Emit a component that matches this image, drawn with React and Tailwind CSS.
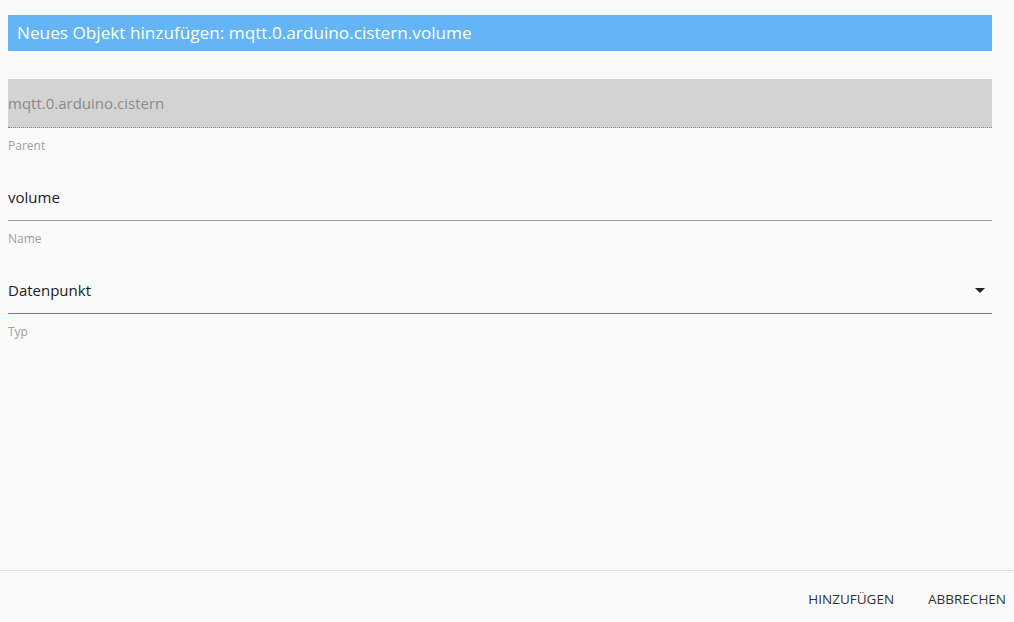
function Label({ children }) {
  return <p className="m-0 mt-[10px] mb-[18px] text-[12px] leading-[16px] text-[#9e9e9e]">{children}</p>
}

export default function App() {
  return (
    <div
      className="flex h-[622px] w-[1014px] flex-col bg-[#fafafa]"
      style={{ fontFamily: '"Open Sans", "Noto Sans", sans-serif' }}
    >
      <div className="flex-1 px-[8px] pr-[22px] pt-[15px]">
        <div className="flex h-[36px] items-center bg-[#64b5f6] px-[9px] text-[17.2px] text-white">
          Neues Objekt hinzufügen: mqtt.0.arduino.cistern.volume
        </div>

        <div className="mt-[28px]">
          <div className="flex h-[49px] items-center border-b border-dotted border-[#888] bg-[#d3d3d3] text-[15px] text-[#8a8a8a]">
            mqtt.0.arduino.cistern
          </div>
          <Label>Parent</Label>

          <div className="flex h-[49px] items-center border-b border-[#9e9e9e] pt-[2px] text-[15px] text-[#212121]">
            volume
          </div>
          <Label>Name</Label>

          <div className="mt-[1px] flex h-[49px] items-center justify-between border-b border-[#2196f3] pt-[2px] text-[15px] text-[#212121]">
            <span>Datenpunkt</span>
            <svg width="24" height="24" viewBox="0 0 24 24" className="fill-[#212121]">
              <path d="M7 10l5 5 5-5z" />
            </svg>
          </div>
          <Label>Typ</Label>
        </div>
      </div>

      <div className="flex h-[52px] items-center justify-end gap-[18px] border-t border-[#e0e0e0] pt-[6px]">
        <button className="px-[8px] py-[6px] text-[13.5px] uppercase text-[#333]">Hinzufügen</button>
        <button className="px-[8px] py-[6px] text-[13.5px] uppercase text-[#333]">Abbrechen</button>
      </div>
    </div>
  )
}
